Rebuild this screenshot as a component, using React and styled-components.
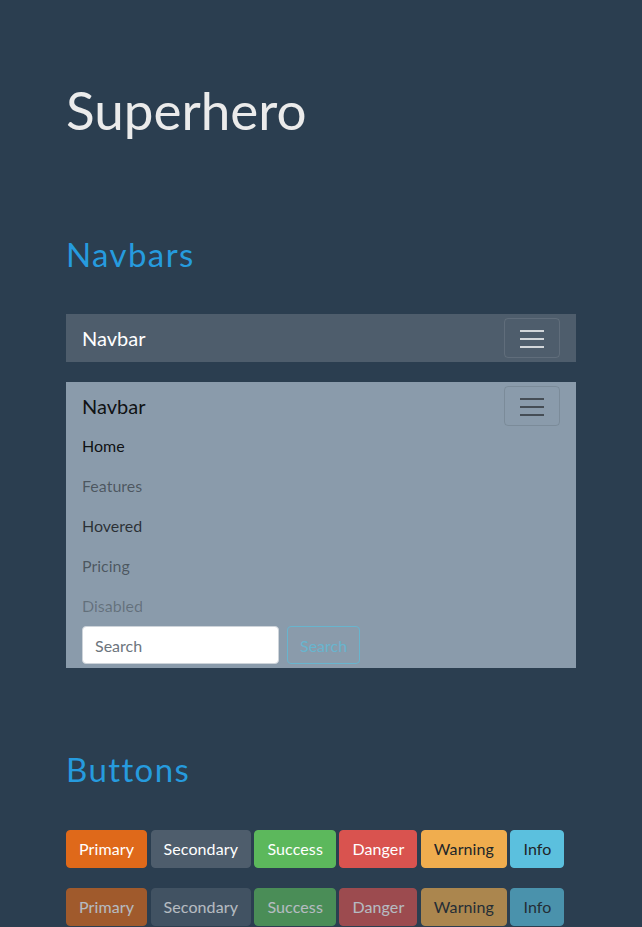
import React from "react";
import styled, { createGlobalStyle } from "styled-components";

const GlobalStyle = createGlobalStyle`
  body {
    margin: 0;
    background-color: #2b3e50;
    color: #ebebeb;
    font-family: Lato, "Open Sans", sans-serif;
    font-size: 16px;
    line-height: 1.5;
  }
`;

const Page = styled.div`
  width: 510px;
  padding: 78px 66px 0;
`;

const Title = styled.h1`
  margin: 0;
  font-size: 53px;
  font-weight: 400;
  line-height: 1.2;
  color: #ebebeb;
`;

const Section = styled.section`
  margin-top: ${(p) => p.$top}px;
`;

const SectionTitle = styled.h2`
  margin: 0 0 ${(p) => p.$gap}px;
  font-size: 33px;
  font-weight: 400;
  line-height: 1.2;
  letter-spacing: 1.4px;
  color: #269bde;
`;

const Navbar = styled.nav`
  display: flex;
  flex-wrap: wrap;
  align-items: center;
  justify-content: space-between;
  padding: 4px 16px;
  margin-bottom: ${(p) => p.$gap || 0}px;
  background-color: ${(p) => (p.$light ? "#8a9bab" : "#4e5d6c")};
`;

const Brand = styled.span`
  font-size: 20px;
  line-height: 30px;
  color: ${(p) => (p.$light ? "rgba(0,0,0,.9)" : "#fff")};
`;

const Toggler = styled.button`
  display: flex;
  align-items: center;
  justify-content: center;
  width: 56px;
  height: 40px;
  padding: 0;
  background: transparent;
  border: 1px solid ${(p) => (p.$light ? "rgba(0,0,0,.1)" : "rgba(255,255,255,.1)")};
  border-radius: 4px;
`;

const Collapse = styled.div`
  width: 100%;
`;

const NavList = styled.ul`
  list-style: none;
  margin: 0;
  padding: 0;
`;

const NavLink = styled.li`
  padding: 8px 0;
  font-size: 16px;
  line-height: 24px;
  color: ${(p) => p.$color};
`;

const SearchForm = styled.form`
  display: flex;
  gap: 8px;
`;

const SearchInput = styled.input`
  box-sizing: border-box;
  width: 197px;
  height: 38px;
  padding: 6px 12px;
  font-family: inherit;
  font-size: 16px;
  color: #495057;
  background: #fff;
  border: 1px solid #ced4da;
  border-radius: 4px;
  &::placeholder {
    color: #6c757d;
  }
`;

const OutlineButton = styled.button`
  box-sizing: border-box;
  height: 38px;
  padding: 6px 12px;
  font-family: inherit;
  font-size: 16px;
  color: #5bc0de;
  background: transparent;
  border: 1px solid #5bc0de;
  border-radius: 4px;
  opacity: 0.7;
`;

const ButtonRow = styled.div`
  display: flex;
  gap: 3.5px;
  margin-bottom: 20px;
`;

const colors = {
  primary: ["#df691a", "#fff"],
  secondary: ["#4e5d6c", "#fff"],
  success: ["#5cb85c", "#fff"],
  danger: ["#d9534f", "#fff"],
  warning: ["#f0ad4e", "#212529"],
  info: ["#5bc0de", "#212529"],
};

const Button = styled.button`
  box-sizing: border-box;
  height: 38px;
  padding: 6px 12px;
  font-family: inherit;
  font-size: 16px;
  line-height: 24px;
  letter-spacing: 0.1px;
  color: ${(p) => colors[p.$kind][1]};
  background-color: ${(p) => colors[p.$kind][0]};
  border: 1px solid ${(p) => colors[p.$kind][0]};
  border-radius: 4px;
  opacity: ${(p) => (p.disabled ? 0.65 : 1)};
`;

function TogglerIcon({ color }) {
  return (
    <svg width="30" height="30" viewBox="0 0 30 30">
      <path
        d="M3 8h24M3 16h24M3 24h24"
        stroke={color}
        strokeWidth="2"
        strokeLinecap="butt"
      />
    </svg>
  );
}

const links = [
  ["Home", "rgba(0,0,0,.9)"],
  ["Features", "rgba(0,0,0,.45)"],
  ["Hovered", "rgba(0,0,0,.7)"],
  ["Pricing", "rgba(0,0,0,.45)"],
  ["Disabled", "rgba(0,0,0,.28)"],
];

const kinds = ["primary", "secondary", "success", "danger", "warning", "info"];
const label = (k) => k[0].toUpperCase() + k.slice(1);

export default function App() {
  return (
    <Page>
      <GlobalStyle />
      <Title>Superhero</Title>

      <Section $top={93}>
        <SectionTitle $gap={40}>Navbars</SectionTitle>
        <Navbar $gap={20}>
          <Brand>Navbar</Brand>
          <Toggler>
            <TogglerIcon color="rgba(255,255,255,.75)" />
          </Toggler>
        </Navbar>
        <Navbar $light>
          <Brand $light>Navbar</Brand>
          <Toggler $light>
            <TogglerIcon color="rgba(0,0,0,.5)" />
          </Toggler>
          <Collapse>
            <NavList>
              {links.map(([text, color]) => (
                <NavLink key={text} $color={color}>
                  {text}
                </NavLink>
              ))}
            </NavList>
            <SearchForm onSubmit={(e) => e.preventDefault()}>
              <SearchInput placeholder="Search" />
              <OutlineButton type="button">Search</OutlineButton>
            </SearchForm>
          </Collapse>
        </Navbar>
      </Section>

      <Section $top={82}>
        <SectionTitle $gap={40}>Buttons</SectionTitle>
        <ButtonRow>
          {kinds.map((k) => (
            <Button key={k} $kind={k}>
              {label(k)}
            </Button>
          ))}
        </ButtonRow>
        <ButtonRow>
          {kinds.map((k) => (
            <Button key={k} $kind={k} disabled>
              {label(k)}
            </Button>
          ))}
        </ButtonRow>
      </Section>
    </Page>
  );
}
